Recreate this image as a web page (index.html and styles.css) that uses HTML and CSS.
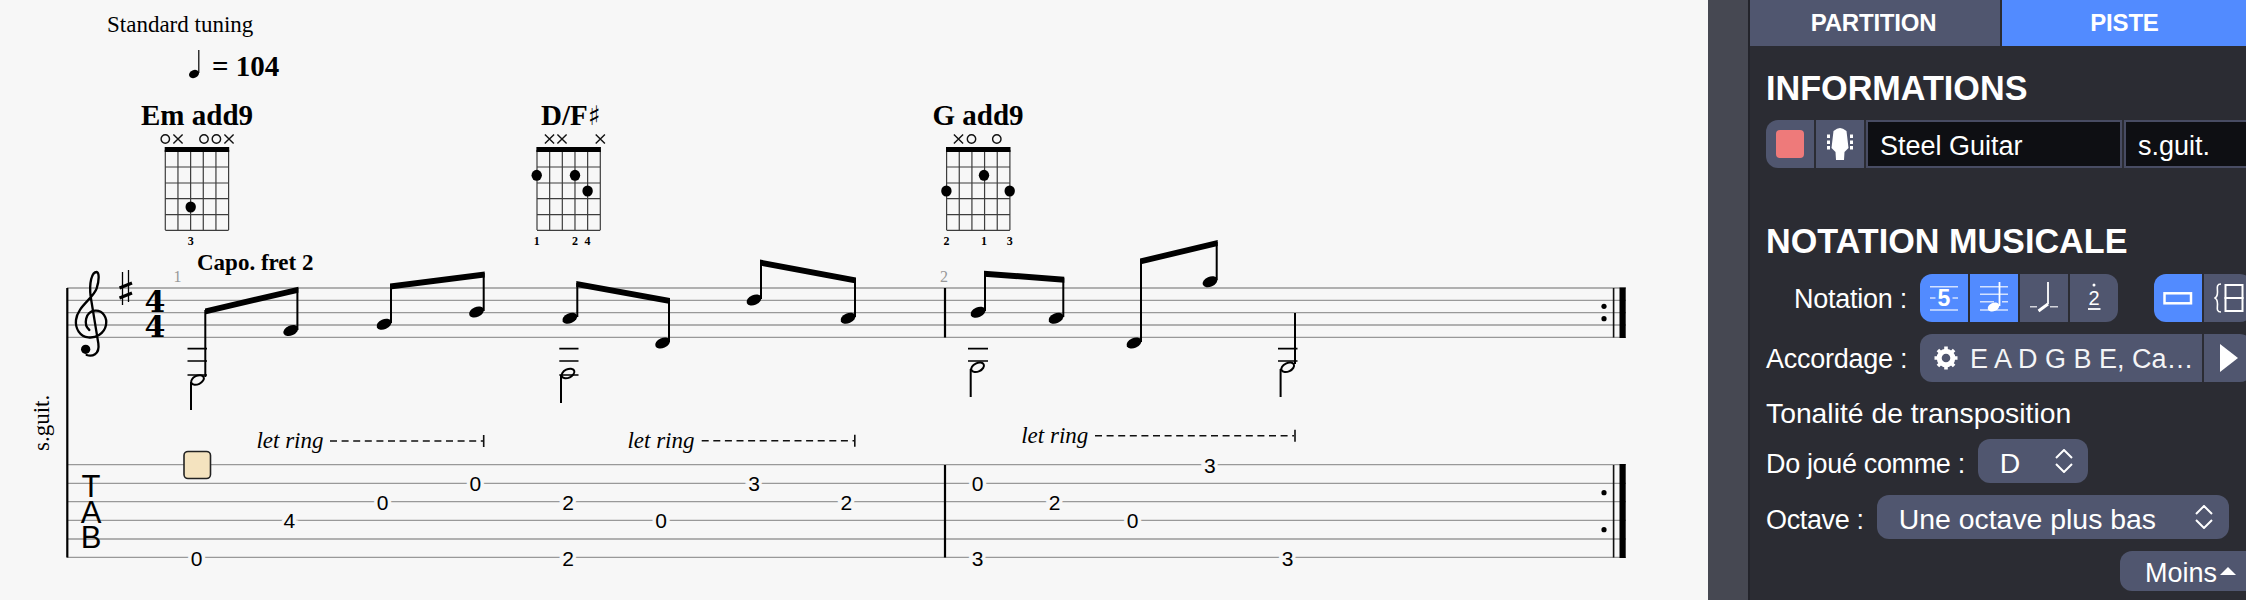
FILE: index.html
```html
<!DOCTYPE html>
<html lang="fr">
<head>
<meta charset="utf-8">
<title>Partition</title>
<link rel="stylesheet" href="styles.css">
</head>
<body>
<div class="app">
  <svg class="score" width="1708" height="600" viewBox="0 0 1708 600" xmlns="http://www.w3.org/2000/svg">
    <defs>
      <g id="grid">
        <path class="grid-line" d="M0 0V80M12.66 0V80M25.32 0V80M37.98 0V80M50.64 0V80M63.3 0V80M0 17H63.3M0 33H63.3M0 48.7H63.3M0 64.7H63.3M0 80.3H63.3"/>
        <rect x="-.6" y="-3" width="64.5" height="5"/>
      </g>
      <path id="mute" class="mark" d="M-4.6-4.6 4.6 4.6M-4.6 4.6 4.6-4.6"/>
      <circle id="open" class="mark" r="4.2"/>
      <ellipse id="head" rx="7.8" ry="5" transform="rotate(-24)"/>
      <ellipse id="hollow" class="hollow" rx="6.8" ry="4.2" transform="rotate(-26)"/>
    </defs>

    <text class="serif t23" x="107" y="32">Standard tuning</text>
    <ellipse cx="194" cy="74" rx="5.2" ry="3.9" transform="rotate(-24 194 74)"/>
    <path class="thin-stem" d="M198.8 50V73"/>
    <text class="serif bold t29" x="212" y="76">= 104</text>

    <text class="serif bold t29" x="141" y="125">Em add9</text>
    <text class="serif bold t29" x="541" y="125">D/F<tspan class="sharp">♯</tspan></text>
    <text class="serif bold t29" x="932.5" y="125">G add9</text>

    <use href="#grid" x="165.3" y="150"/>
    <use href="#grid" x="537" y="150"/>
    <use href="#grid" x="946.6" y="150"/>

    <use href="#open" x="165.3" y="139"/><use href="#mute" x="178" y="139"/><use href="#open" x="204" y="139"/><use href="#open" x="216.4" y="139"/><use href="#mute" x="229" y="139"/>
    <use href="#mute" x="549.5" y="139"/><use href="#mute" x="562" y="139"/><use href="#mute" x="600.3" y="139"/>
    <use href="#mute" x="958.5" y="139"/><use href="#open" x="971.5" y="139"/><use href="#open" x="996.8" y="139"/>

    <ellipse cx="190.7" cy="207" rx="5.2" ry="5.5"/>
    <ellipse cx="536.7" cy="175.3" rx="5.2" ry="5.5"/><ellipse cx="575" cy="175.3" rx="5.2" ry="5.5"/><ellipse cx="587.6" cy="191" rx="5.2" ry="5.5"/>
    <ellipse cx="946.4" cy="191" rx="5.2" ry="5.5"/><ellipse cx="984" cy="175.3" rx="5.2" ry="5.5"/><ellipse cx="1009.7" cy="191" rx="5.2" ry="5.5"/>

    <g class="serif bold t11 mid">
      <text x="190.7" y="244.5">3</text>
      <text x="536.7" y="244.5">1</text><text x="575" y="244.5">2</text><text x="587.6" y="244.5">4</text>
      <text x="946.4" y="244.5">2</text><text x="984" y="244.5">1</text><text x="1009.7" y="244.5">3</text>
    </g>

    <text class="serif bold t23" x="197" y="270">Capo. fret 2</text>
    <text class="serif t15 gray" x="173.5" y="281.5">1</text>
    <text class="serif t15 gray" x="940" y="282">2</text>

    <path class="staff" d="M67 288H1626M67 300.3H1626M67 312.6H1626M67 325H1626M67 337.3H1626"/>
    <path class="staff" d="M67 464.7H1626M67 483.3H1626M67 501.7H1626M67 520.3H1626M67 539H1626M67 557.4H1626"/>

    <path class="bar" d="M67.3 288V557.5"/>
    <path class="bar" d="M945 288V337.5M945 465V557.5"/>
    <path class="thin-bar" d="M1613.6 288V337.5M1613.6 465V557.5"/>
    <path class="thick-bar" d="M1622.6 287.4V338M1622.6 464V558"/>
    <circle cx="1604" cy="306.3" r="2.6"/><circle cx="1604" cy="318.7" r="2.6"/>
    <circle cx="1604" cy="492.7" r="2.6"/><circle cx="1604" cy="529.7" r="2.6"/>

    <g transform="translate(50 260) scale(.3333)">
      <path class="clef" d="M118 210C100 195 105 155 135 152C160 150 172 175 168 195C163 222 135 235 115 232C90 230 75 205 78 180C82 140 130 115 140 85C148 60 148 38 140 36C125 36 117 70 122 110L145 250C150 285 125 290 110 285"/>
      <circle cx="107" cy="268" r="14"/>
    </g>
    <path class="sharp-v" d="M122.5 272V305M128.5 270V302"/>
    <path class="sharp-h" d="M119.5 288 132 283M119.5 298 132 293"/>
    <g class="timesig mid">
      <text x="155" y="311.5">4</text>
      <text x="155" y="336.8">4</text>
    </g>

    <path class="ledger" d="M187.5 348.7H207M187.5 361H207M187.5 375H207M559.3 348.7H578.5M559.3 361H578.5M559.3 375H578.5M968 348.7H988M968 361H988M1278 348.7H1297.5M1278 361H1297.5"/>

    <g class="stems">
      <path d="M205.3 310V377M191 382V410M297.4 288V330M391 285V323M483.7 273V311M577.3 283V317M669 300V342M561 375V403M761 261V299M855 279V317M985 272V311M1063.3 278V317M970.7 369V397M1141 260V342M1216.7 242V280M1295 313V364M1280.6 369V397"/>
    </g>
    <polygon points="205,308.5 298.4,286.7 298.4,292.7 205,314.5"/>
    <polygon points="390,283.5 484.7,271.5 484.7,277.5 390,289.5"/>
    <polygon points="576.3,281 670,298 670,304 576.3,287"/>
    <polygon points="760,259.5 856,277.5 856,283.5 760,265.5"/>
    <polygon points="984,270.7 1064.3,276.7 1064.3,282.7 984,276.7"/>
    <polygon points="1140,258.5 1217.7,240 1217.7,246 1140,264.5"/>

    <use href="#head" x="290.8" y="330.5"/><use href="#head" x="384" y="324.3"/><use href="#head" x="476.5" y="312"/>
    <use href="#head" x="569.8" y="318.3"/><use href="#head" x="662.6" y="343"/><use href="#head" x="754" y="300"/>
    <use href="#head" x="848" y="318.3"/><use href="#head" x="978" y="312.3"/><use href="#head" x="1056" y="318.3"/>
    <use href="#head" x="1134" y="343"/><use href="#head" x="1210" y="281.7"/>
    <use href="#hollow" x="197.5" y="380"/><use href="#hollow" x="568" y="373.5"/><use href="#hollow" x="977.6" y="367.3"/><use href="#hollow" x="1287.7" y="367.3"/>

    <text class="serif italic t23" x="256.4" y="447.5">let ring</text>
    <text class="serif italic t23" x="627.4" y="447.5">let ring</text>
    <text class="serif italic t23" x="1021.2" y="442.5">let ring</text>
    <path class="dash" d="M330 441H483M701.7 440.7H854M1095 435.7H1294"/>
    <path class="tick" d="M483.7 435V447M854.8 434.7V446.7M1295 429.7V441.7"/>

    <rect class="cursor" x="184" y="451.5" width="26.5" height="27" rx="4"/>

    <g class="sans tab-letters mid">
      <text x="91" y="496.5">T</text>
      <text x="91" y="522.5">A</text>
      <text x="91" y="547.5">B</text>
    </g>
    <g class="sans fret mid">
      <text x="196.7" y="565.5">0</text>
      <text x="289.3" y="528">4</text>
      <text x="382.7" y="509.5">0</text>
      <text x="475.3" y="491">0</text>
      <text x="568" y="509.5">2</text>
      <text x="568" y="565.5">2</text>
      <text x="661" y="528">0</text>
      <text x="754" y="491">3</text>
      <text x="846.3" y="509.5">2</text>
      <text x="977.6" y="491">0</text>
      <text x="977.6" y="565.5">3</text>
      <text x="1054.5" y="509.5">2</text>
      <text x="1132.5" y="528">0</text>
      <text x="1209.8" y="472.5">3</text>
      <text x="1287.5" y="565.5">3</text>
    </g>
    <text class="serif t23" transform="translate(49 451) rotate(-90)">s.guit.</text>
  </svg>

  <div class="strip"></div>

  <aside class="panel">
    <nav class="tabs">
      <div class="tab tab-off">PARTITION</div>
      <div class="tab tab-on">PISTE</div>
    </nav>
    <div class="content">
      <h2 class="heading heading-first">INFORMATIONS</h2>
      <div class="row">
        <div class="btn btn-first">
          <span class="swatch"></span>
        </div>
        <div class="btn">
          <svg width="26" height="32" viewBox="0 0 26 32" xmlns="http://www.w3.org/2000/svg">
            <path class="fill-white" d="M13 0 16 .7 19.500 3 21.500 20 17.500 24 17 32H9L8.500 24 4.500 20 6.500 3 10 .7Z"/>
            <path class="fill-white" d="M0 6.500H3V10H0ZM0 12.500H3V16H0ZM0 18H3V21.500H0ZM23 6.500H26V10H23ZM23 12.500H26V16H23ZM23 18H26V21.500H23Z"/>
          </svg>
        </div>
        <div class="field field-name">Steel Guitar</div>
        <div class="field field-short">s.guit.</div>
      </div>

      <h2 class="heading heading-second">NOTATION MUSICALE</h2>
      <div class="row row-label">
        <span class="label label-fixed">Notation :</span>
        <div class="group">
          <div class="btn btn-on btn-first">
            <svg width="48" height="48" viewBox="0 0 48 48" xmlns="http://www.w3.org/2000/svg">
              <path class="ico-line" d="M10 12.700H38M10 24H15.500M32.500 24H38M10 36H38"/>
              <text class="ico-num" x="24" y="31.500">5</text>
            </svg>
          </div>
          <div class="btn btn-on">
            <svg width="48" height="48" viewBox="0 0 48 48" xmlns="http://www.w3.org/2000/svg">
              <path class="ico-line" d="M10 12.700H38M10 20.300H38M10 27.700H24M32 27.700H38M10 36H38"/>
              <ellipse class="fill-white" cx="23.500" cy="33" rx="6" ry="4.200" transform="rotate(-24 23.500 33)"/>
              <path class="ico-stem" d="M29.500 8V32"/>
            </svg>
          </div>
          <div class="btn">
            <svg width="48" height="48" viewBox="0 0 48 48" xmlns="http://www.w3.org/2000/svg">
              <path class="ico-line" d="M10 32.700H17M30 32.700H38"/>
              <path class="ico-stem" d="M28 8V30"/>
              <path class="ico-flag" d="M28 30 18.500 37"/>
            </svg>
          </div>
          <div class="btn btn-last">
            <svg width="48" height="48" viewBox="0 0 48 48" xmlns="http://www.w3.org/2000/svg">
              <circle class="fill-white" cx="24" cy="11" r="1.500"/>
              <text class="ico-small" x="24" y="31">2</text>
              <path class="ico-stem" d="M18 35H30.500"/>
            </svg>
          </div>
        </div>
        <div class="group group-layout">
          <div class="btn btn-on btn-first">
            <svg width="48" height="48" viewBox="0 0 48 48" xmlns="http://www.w3.org/2000/svg">
              <rect class="ico-box" x="10.500" y="19.300" width="26.500" height="10"/>
            </svg>
          </div>
          <div class="btn btn-last">
            <svg width="48" height="48" viewBox="0 0 48 48" xmlns="http://www.w3.org/2000/svg">
              <path class="ico-brace" d="M17 10C12 10 13.500 14 13.500 18C13.500 22 12.500 23.500 10.500 24C12.500 24.500 13.500 26 13.500 30C13.500 34 12 38 17 38"/>
              <rect class="ico-box2" x="21.500" y="11" width="17" height="13"/>
              <rect class="ico-box2" x="21.500" y="24" width="17" height="13"/>
            </svg>
          </div>
        </div>
      </div>

      <div class="row row-label">
        <span class="label label-fixed">Accordage :</span>
        <div class="group">
          <div class="btn btn-first btn-tuning">
            <svg class="gear" width="24" height="24" viewBox="-12 -12 24 24" xmlns="http://www.w3.org/2000/svg">
              <circle class="gear-ring" r="6.800"/>
              <path class="gear-teeth" d="M0-11.500V11.500M-11.500 0H11.500M-8.100-8.100 8.100 8.100M-8.100 8.100 8.100-8.100"/>
            </svg>
            <span class="tuning-text">E A D G B E, Ca…</span>
          </div>
          <div class="btn btn-last">
            <svg width="48" height="48" viewBox="0 0 48 48" xmlns="http://www.w3.org/2000/svg">
              <path class="fill-white" d="M16 10 34 24 16 38Z"/>
            </svg>
          </div>
        </div>
      </div>

      <p class="title-line">Tonalité de transposition</p>

      <div class="row row-label row-select">
        <span class="label">Do joué comme :</span>
        <div class="select select-key">
          <span class="select-text">D</span>
          <svg class="chevrons" width="18" height="24" viewBox="0 0 18 24" xmlns="http://www.w3.org/2000/svg">
            <path class="chev" d="M1 9 9 1 17 9M1 15 9 23 17 15"/>
          </svg>
        </div>
      </div>

      <div class="row row-label row-select">
        <span class="label">Octave :</span>
        <div class="select select-octave">
          <span class="select-text">Une octave plus bas</span>
          <svg class="chevrons" width="18" height="24" viewBox="0 0 18 24" xmlns="http://www.w3.org/2000/svg">
            <path class="chev" d="M1 9 9 1 17 9M1 15 9 23 17 15"/>
          </svg>
        </div>
      </div>

      <div class="less">
        <span class="less-text">Moins</span>
        <svg width="16" height="8" viewBox="0 0 16 8" xmlns="http://www.w3.org/2000/svg">
          <path class="fill-white" d="M8 0 16 8H0Z"/>
        </svg>
      </div>
    </div>
  </aside>
</div>
</body>
</html>
```

FILE: styles.css
```css
* { box-sizing: border-box; }

html, body {
  margin: 0;
  padding: 0;
  background: #f7f7f7;
}

.app {
  display: flex;
  width: 2246px;
  height: 600px;
  overflow: hidden;
  background: #f7f7f7;
  font-family: "Liberation Sans", Arial, sans-serif;
}

/* Score */
.score { flex: 0 0 1708px; display: block; }
.serif { font-family: "Liberation Serif", "DejaVu Serif", serif; }
.sans { font-family: "Liberation Sans", Arial, sans-serif; }
.bold { font-weight: 700; }
.italic { font-style: italic; }
.mid { text-anchor: middle; }
.t11 { font-size: 12px; }
.t15 { font-size: 16px; }
.t23 { font-size: 23px; }
.t29 { font-size: 29px; }
.timesig { font: 700 30px "DejaVu Serif", serif; }
.gray { fill: #999; }
.sharp { font-family: "DejaVu Sans", sans-serif; font-size: 27px; font-weight: 700; }

.grid-line { fill: none; stroke: #3d3d3d; stroke-width: 1.2; }
.mark { fill: none; stroke: #111; stroke-width: 1.4; }
.hollow { fill: none; stroke: #000; stroke-width: 2; }
.thin-stem { stroke: #000; stroke-width: 1.2; fill: none; }
.staff { stroke: #999; stroke-width: 1.3; fill: none; }
.bar { stroke: #000; stroke-width: 2.2; fill: none; }
.thin-bar { stroke: #111; stroke-width: 1.6; fill: none; }
.thick-bar { stroke: #000; stroke-width: 6.2; fill: none; }
.clef { fill: none; stroke: #000; stroke-width: 7; stroke-linecap: round; }
.sharp-v { stroke: #000; stroke-width: 1.3; fill: none; }
.sharp-h { stroke: #000; stroke-width: 3; fill: none; }
.ledger { stroke: #000; stroke-width: 1.7; fill: none; }
.stems path { stroke: #000; stroke-width: 2; fill: none; }
.dash { stroke: #111; stroke-width: 1.6; fill: none; stroke-dasharray: 7 4.6; }
.tick { stroke: #111; stroke-width: 1.6; fill: none; }
.cursor { fill: #f4e3bf; stroke: #222; stroke-width: 1.6; }
.tab-letters { font-size: 31px; }
.fret {
  font-size: 21px;
  paint-order: stroke;
  stroke: #f7f7f7;
  stroke-width: 7px;
}

/* Side strip and panel */
.strip {
  flex: 0 0 42px;
  background: #464852;
  border-right: 2px solid #23242b;
}

.panel {
  flex: 0 0 496px;
  min-width: 0;
  background: #2b2c33;
  color: #fff;
}

.tabs {
  display: flex;
  gap: 2px;
  width: 500px;
  height: 46px;
}

.tab {
  height: 46px;
  padding-right: 3px;
  line-height: 45px;
  text-align: center;
  font-size: 24px;
  font-weight: 700;
  letter-spacing: -.2px;
}

.tab-off { flex: 0 0 250px; background: #50566f; }
.tab-on { flex: 1; background: #528bff; }

.content { padding-left: 16px; width: 520px; }

.heading {
  margin: 0;
  font-size: 34.200px;
  line-height: 40px;
  font-weight: 700;
}
.heading-first { margin-top: 22px; margin-bottom: 12px; }
.heading-second { margin-top: 53px; margin-bottom: 13px; }

.row { display: flex; align-items: stretch; gap: 2px; height: 48px; }
.row-label { gap: 13px; margin-bottom: 12px; }
.row-select { height: 44px; margin-top: 13px; margin-bottom: 0; }
.row-select + .row-select { margin-top: 12px; }

.btn {
  flex: 0 0 48px;
  height: 48px;
  display: flex;
  align-items: center;
  justify-content: center;
  background: #50566f;
}
.btn-on { background: #528bff; }
.btn-first { border-radius: 12px 0 0 12px; }
.btn-last { border-radius: 0 12px 12px 0; }

.swatch {
  width: 28px;
  height: 28px;
  border-radius: 4px;
  background: #ee7a7a;
}

.field {
  height: 48px;
  padding-left: 12px;
  background: #0e0f13;
  border: 2px solid #484c63;
  font-size: 27px;
  line-height: 48px;
}
.field-name { flex: 0 0 256px; }
.field-short { flex: 0 0 140px; border-radius: 0 12px 12px 0; }

.label { font-size: 27px; line-height: 51px; white-space: nowrap; letter-spacing: -.25px; }
.label-fixed { flex: 0 0 141px; min-width: 0; text-align: right; }
.row-select .label { line-height: 50px; letter-spacing: -.35px; }

.group { display: flex; gap: 2px; }
.group-layout { margin-left: 23px; }

.btn-tuning {
  flex: 0 0 282px;
  justify-content: flex-start;
  padding-left: 14px;
  gap: 12px;
}
.tuning-text { font-size: 27px; padding-top: 3px; white-space: nowrap; color: #f4f4f6; }

.title-line { margin: 0 0 -6px; font-size: 28.300px; line-height: 38px; }

.select {
  display: flex;
  align-items: center;
  justify-content: space-between;
  height: 44px;
  padding: 0 15px 0 22px;
  background: #50566f;
  border-radius: 12px;
  font-size: 28.400px;
}
.select-text { padding-top: 5px; }
.select-key { flex: 0 0 110px; }
.select-octave { flex: 0 0 352px; padding-right: 16px; }
.chevrons { display: block; }
.chev { fill: none; stroke: #fff; stroke-width: 2; }

.less {
  display: flex;
  align-items: center;
  gap: 3px;
  width: 140px;
  height: 40px;
  margin-top: 12px;
  margin-left: 354px;
  padding-left: 25px;
  background: #50566f;
  border-radius: 12px;
  font-size: 27px;
}
.less-text { padding-top: 4px; }

.fill-white { fill: #fff; }
.ico-line { stroke: #fff; stroke-opacity: .75; stroke-width: 1.6; fill: none; }
.ico-num { fill: #fff; font: 700 23px "Liberation Sans", sans-serif; text-anchor: middle; }
.ico-small { fill: #fff; font: 400 20px "Liberation Sans", sans-serif; text-anchor: middle; }
.ico-stem { stroke: #fff; stroke-width: 1.8; fill: none; }
.ico-flag { stroke: #fff; stroke-width: 3; fill: none; }
.ico-box { fill: none; stroke: #fff; stroke-width: 2.5; }
.ico-box2 { fill: none; stroke: #fff; stroke-width: 2; }
.ico-brace { fill: none; stroke: #fff; stroke-width: 1.6; }
.gear-ring { fill: none; stroke: #fff; stroke-width: 5; }
.gear-teeth { stroke: #fff; stroke-width: 3.6; stroke-dasharray: 4 15; fill: none; }
```
